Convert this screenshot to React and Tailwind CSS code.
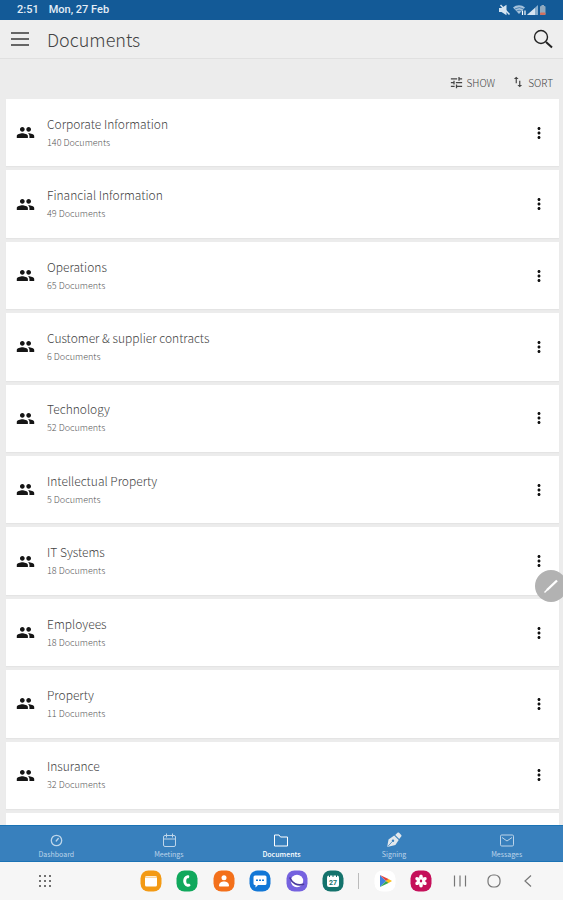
import { MdGroup, MdMoreVert, MdTune, MdSwapVert } from 'react-icons/md';

const FOLDERS = [
  { title: 'Corporate Information', count: 140 },
  { title: 'Financial Information', count: 49 },
  { title: 'Operations', count: 65 },
  { title: 'Customer & supplier contracts', count: 6 },
  { title: 'Technology', count: 52 },
  { title: 'Intellectual Property', count: 5 },
  { title: 'IT Systems', count: 18 },
  { title: 'Employees', count: 18 },
  { title: 'Property', count: 11 },
  { title: 'Insurance', count: 32 },
];

const TABS = [
  { label: 'Dashboard', Icon: GaugeIcon },
  { label: 'Meetings', Icon: MeetingIcon },
  { label: 'Documents', Icon: FolderIcon, active: true },
  { label: 'Signing', Icon: PenNibIcon },
  { label: 'Messages', Icon: MailIcon },
];

function GaugeIcon() {
  return (
    <svg viewBox="0 0 16 16" className="size-4" fill="none" stroke="currentColor" strokeWidth="1.3" strokeLinecap="round">
      <circle cx="8.5" cy="8.5" r="5.2" />
      <path d="M8.2 9l2.1-2.500" />
    </svg>
  );
}

function MeetingIcon() {
  return (
    <svg viewBox="0 0 16 16" className="size-4" fill="none" stroke="currentColor" strokeWidth="1">
      <rect x="2.5" y="3.5" width="12" height="11" rx="1.5" />
      <path d="M2.5 7h12M5.500 1.500v4M11.500 1.500v4" />
    </svg>
  );
}

function FolderIcon() {
  return (
    <svg viewBox="0 0 16 16" className="size-4" fill="none" stroke="currentColor" strokeWidth="1" strokeLinejoin="round">
      <path d="M1.5 3H6l1.5 2h7v9h-13z" />
    </svg>
  );
}

function PenNibIcon() {
  return (
    <svg viewBox="0 0 16 16" className="size-4 text-[#e3e8ec]" fill="currentColor">
      <path d="M1.2 15L2.500 7.500l5.700-4 4.500 4.500-3.300 5z" />
      <path d="M9.2 3l2.300-2.300c.5-.5 1.200-.3 1.600.1l2.100 2.100c.5.5.5 1.100 0 1.600L13.200 7z" />
      <path d="M1.8 14.500l4.400-4.900" stroke="#3880bd" strokeWidth=".8" />
      <circle cx="7" cy="8.800" r="1.200" fill="#3880bd" />
    </svg>
  );
}

function MailIcon() {
  return (
    <svg viewBox="0 0 16 16" className="size-4" fill="none" stroke="currentColor" strokeWidth="1">
      <rect x="1.5" y="3" width="13" height="11" rx="1.2" />
      <path d="M3 5.500l5 3.500 5-3.500" />
    </svg>
  );
}

function StatusIcons() {
  return (
    <svg viewBox="0 0 52 12" className="h-3 w-[52px]" fill="#d5e4f1">
      <path d="M0 4h2.500L7.500.8v10.400L2.500 8H0z" />
      <path d="M1.500 1l9 9.500" stroke="#d5e4f1" strokeWidth="1.500" />
      <path d="M14 3.600a9 9 0 0 1 12 0L20 10z" opacity=".75" />
      <path d="M16 4.900q4.300-2.600 8.600 0M17.500 7q2.600-1.600 5.200 0" fill="none" stroke="#135a97" strokeWidth=".6" />
      <path d="M23.500 6.500v4.500M26 11V6.500" stroke="#fff" strokeWidth="1.200" />
      <path d="M39 1v10H28z" opacity=".6" />
      <path d="M36 4v7h-8z" />
      <rect x="41" y="2" width="5.500" height="9" rx="1" fill="#8fa9bf" />
      <rect x="42.500" y="1" width="2.500" height="1.500" fill="#8fa9bf" />
      <rect x="41" y="8.500" width="5.500" height="2.500" rx="1" fill="#d2705f" />
    </svg>
  );
}

function FolderCard({ title, count }) {
  return (
    <li className="flex flex-1 items-center bg-white pr-[11px] pl-[10px] shadow-[0_1px_1px_rgba(0,0,0,0.03)]">
      <MdGroup className="size-[19px] shrink-0 text-[#151515]" />
      <div className="ml-3 flex-1">
        <h2 className="text-[12px] leading-5 font-light text-[#444]">{title}</h2>
        <p className="text-[9px] leading-[18px] font-light text-[#555]">{count} Documents</p>
      </div>
      <button type="button" aria-label={`More options for ${title}`} className="text-[#111]">
        <MdMoreVert className="size-[18px]" />
      </button>
    </li>
  );
}

function AppIcon({ label, color, children }) {
  return (
    <button type="button" aria-label={label}>
      <svg viewBox="0 0 22 22" className="size-[22px]">
        <rect x=".5" y=".5" width="21" height="21" rx="8" fill={color} />
        {children}
      </svg>
    </button>
  );
}

function SystemBar() {
  return (
    <footer className="flex h-[38px] items-center bg-[#f6f6f6] pr-[27px] pl-[38px]">
      <button type="button" aria-label="All apps">
        <svg viewBox="0 0 14 14" className="size-[14px]" fill="#444">
          {[2, 7, 12].map((y) => [2, 7, 12].map((x) => <circle key={`${x}-${y}`} cx={x} cy={y} r="1" />))}
        </svg>
      </button>
      <div className="ml-[88px] flex flex-1 items-center justify-between">
        <AppIcon label="Files" color="#f39a14">
          <path d="M5 7.500a1.500 1.500 0 0 1 1.500-1.500h9A1.500 1.500 0 0 1 17 7.500V15a1.500 1.500 0 0 1-1.500 1.500h-9A1.500 1.500 0 0 1 5 15z" fill="#fff" />
          <path d="M5 7.200h12" stroke="#f8c575" strokeWidth="1" />
        </AppIcon>
        <AppIcon label="Phone" color="#10a85c">
          <path d="M11.500 5.300C5.800 6 5.800 15.800 11.500 16.700c1.600.3 3-.4 3-1.400 0-1.200-1.400-1.900-2.400-1.600-.6.200-1 .1-1.300-.3-.8-1.300-.8-3.500 0-4.700.3-.4.700-.5 1.300-.4 1.200.1 1.700-2.700.4-3-.3 0-.7-.1-1 0z" fill="#fff" />
        </AppIcon>
        <AppIcon label="Contacts" color="#f3701b">
          <circle cx="11" cy="7.800" r="2.500" fill="#fff" />
          <path d="M6 15.500c0-5.500 10-5.500 10 0 0 .7-.5 1-1 1H7c-.5 0-1-.3-1-1z" fill="#fff" />
        </AppIcon>
        <AppIcon label="Chat" color="#1277d6">
          <path d="M6 5.500h10a1.500 1.500 0 0 1 1.500 1.500v6.500A1.500 1.500 0 0 1 16 15H9l-2.500 2.500V15H6a1.500 1.500 0 0 1-1.500-1.500V7A1.500 1.500 0 0 1 6 5.500z" fill="#fff" />
          <path d="M7 9.500h2v1.600H7zM10 9.500h2v1.600h-2zM13 9.500h2v1.600h-2z" fill="#1277d6" />
        </AppIcon>
        <AppIcon label="Internet" color="#7562df">
          <circle cx="11" cy="11" r="6.200" fill="#fff" />
          <path d="M4 8c2 5 7 8 13.500 6.300" fill="none" stroke="#4a3a9d" strokeWidth="1.700" strokeLinecap="round" />
        </AppIcon>
        <AppIcon label="Calendar" color="#14736c">
          <rect x="5" y="5.500" width="12" height="11.500" rx="2" fill="#fff" />
          <path d="M7.500 4v3M11 4v3M14.500 4v3" stroke="#14736c" strokeWidth="1" />
          <text x="11" y="14.500" textAnchor="middle" fontSize="7" fontWeight="700" fill="#14736c" fontFamily="Roboto, sans-serif">27</text>
        </AppIcon>
        <span className="h-4 w-px bg-[#bbb]" />
        <AppIcon label="Play Store" color="#fff">
          <path d="M6 5v12l6-6z" fill="#3f83e0" />
          <path d="M6 5l9 4.200-3 1.800z" fill="#e2453c" />
          <path d="M6 17l9-4.200-3-1.800z" fill="#35a853" />
          <path d="M14.500 9L18 11l-3.500 2-2.500-2z" fill="#f8bc15" />
        </AppIcon>
        <AppIcon label="Gallery" color="#c5105a">
          {[0, 60, 120, 180, 240, 300].map((deg) => (
            <ellipse key={deg} cx="11" cy="7.300" rx="1.900" ry="2.700" fill="#fff" transform={`rotate(${deg} 11 11)`} />
          ))}
          <circle cx="11" cy="11" r="1.200" fill="#c5105a" />
        </AppIcon>
      </div>
      <div className="ml-5 flex items-center gap-[18px] text-[#777]">
        <button type="button" aria-label="Recent apps">
          <svg viewBox="0 0 16 16" className="size-4" fill="none" stroke="currentColor" strokeWidth="1.200">
            <path d="M2.500 2.500v11M8 2.500v11M13.500 2.500v11" />
          </svg>
        </button>
        <button type="button" aria-label="Home">
          <svg viewBox="0 0 16 16" className="size-4" fill="none" stroke="currentColor" strokeWidth="1.200">
            <rect x="2" y="2" width="12" height="12" rx="5" />
          </svg>
        </button>
        <button type="button" aria-label="Back">
          <svg viewBox="0 0 16 16" className="size-4" fill="none" stroke="currentColor" strokeWidth="1.200">
            <path d="M11 2.500L5 8l6 5.500" />
          </svg>
        </button>
      </div>
    </footer>
  );
}

export default function App() {
  return (
    <div className="relative flex min-h-screen flex-col bg-[#ececec] font-['Noto_Sans_CJK_JP',sans-serif]">
      {/* Status bar */}
      <div className="flex h-5 items-center justify-between bg-[#135a97] pr-3 pl-[17px] font-[Roboto,sans-serif] text-[11px] font-medium text-[#e3edf6]">
        <div className="flex gap-[10px]">
          <span>2:51</span>
          <span>Mon, 27 Feb</span>
        </div>
        <StatusIcons />
      </div>

      {/* Header */}
      <header className="flex h-[39px] items-center border-b border-[#e0e0e0] bg-[#eee] pr-[9px] pl-[10px]">
        <button type="button" aria-label="Menu" className="text-[#666]">
          <svg viewBox="0 0 20 20" className="size-5" stroke="currentColor" strokeWidth="2">
            <path d="M1 4h18M1 10h18M1 16h18" />
          </svg>
        </button>
        <h1 className="ml-[17px] flex-1 text-[18px] leading-6 font-light text-[#444]">Documents</h1>
        <button type="button" aria-label="Search" className="text-[#222]">
          <svg viewBox="0 0 22 22" className="size-[22px]" fill="none" stroke="currentColor">
            <circle cx="9" cy="9" r="6.500" strokeWidth="1.400" />
            <path d="M14 14l6 5.500" strokeWidth="2" />
          </svg>
        </button>
      </header>

      {/* List actions */}
      <div className="flex h-10 items-center justify-end gap-4 pt-[6px] pr-[10px] text-[10px] font-light text-[#444]">
        <button type="button" className="flex items-center gap-[3px]">
          <MdTune className="size-[15px]" />
          SHOW
        </button>
        <button type="button" className="flex items-center gap-[3px]">
          <MdSwapVert className="size-[14px]" />
          SORT
        </button>
      </div>

      <main className="flex flex-1 flex-col pr-[4px] pl-[6px]">
        <ul className="flex flex-1 flex-col gap-1">
          {FOLDERS.map((folder) => (
            <FolderCard key={folder.title} {...folder} />
          ))}
          <li className="h-3 bg-white" />
        </ul>
      </main>

      {/* Floating pen */}
      <button
        type="button"
        aria-label="Edit"
        className="absolute top-[570px] right-[-4px] flex size-8 items-center justify-center rounded-full bg-[#b2b2b2] text-white"
      >
        <svg viewBox="0 0 16 16" className="size-4" fill="none" stroke="currentColor">
          <path d="M4 12L14 2.500" strokeWidth="2.400" />
          <path d="M1.500 14.500L5 11" strokeWidth="1.400" />
        </svg>
      </button>

      {/* Tabs */}
      <nav className="grid h-[37px] grid-cols-5 border-y border-[#1b73b5] bg-[#3880bd]">
        {TABS.map(({ label, Icon, active }) => (
          <a
            key={label}
            href={`#${label.toLowerCase()}`}
            className={`flex flex-col items-center pt-[6px] text-[7px] leading-3 ${active ? 'font-medium text-white' : 'text-[#bdd5ea]'}`}
          >
            <Icon />
            {label}
          </a>
        ))}
      </nav>

      <SystemBar />
    </div>
  );
}
